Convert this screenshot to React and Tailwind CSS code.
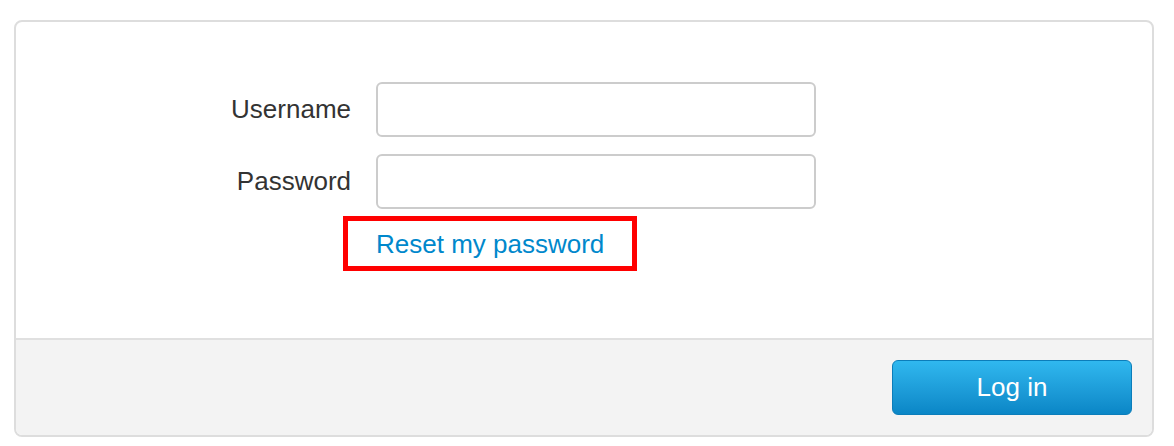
export default function App() {
    const font = { fontFamily: '"Liberation Sans", Arial, sans-serif' };

    return (
        <div className="bg-white min-h-screen pt-[20px] pl-[14px]" style={font}>
            <div className="w-[1140px] border-2 border-[#dddddd] rounded-[8px] overflow-hidden bg-white">
                <div className="pt-[60px] pb-[67px] flex flex-col">
                    <div className="flex items-center">
                        <label className="w-[360px] pr-[25px] text-right text-[26px] text-[#333333]">Username</label>
                        <input type="text" className="w-[440px] h-[55px] border-2 border-[#cccccc] rounded-[6px] bg-white outline-none" />
                    </div>
                    <div className="flex items-center mt-[17px]">
                        <label className="w-[360px] pr-[25px] text-right text-[26px] text-[#333333]">Password</label>
                        <input type="password" className="w-[440px] h-[55px] border-2 border-[#cccccc] rounded-[6px] bg-white outline-none" />
                    </div>
                    <div className="flex mt-[7px]">
                        <div className="ml-[327px] border-[5px] border-[#ff0000] h-[55px] w-[294px] pl-[28px] flex items-center">
                            <a href="#" className="text-[26px] leading-none text-[#0088cc]">Reset my password</a>
                        </div>
                    </div>
                </div>
                <div className="border-t-2 border-[#e0e0e0] bg-[#f3f3f3] px-[20px] py-[20px] flex justify-end">
                    <button className="w-[240px] h-[55px] rounded-[6px] border border-[#0b7dba] bg-gradient-to-b from-[#30b8ef] to-[#0a86c6] text-white text-[26px]">
                        Log in
                    </button>
                </div>
            </div>
        </div>
    );
}
